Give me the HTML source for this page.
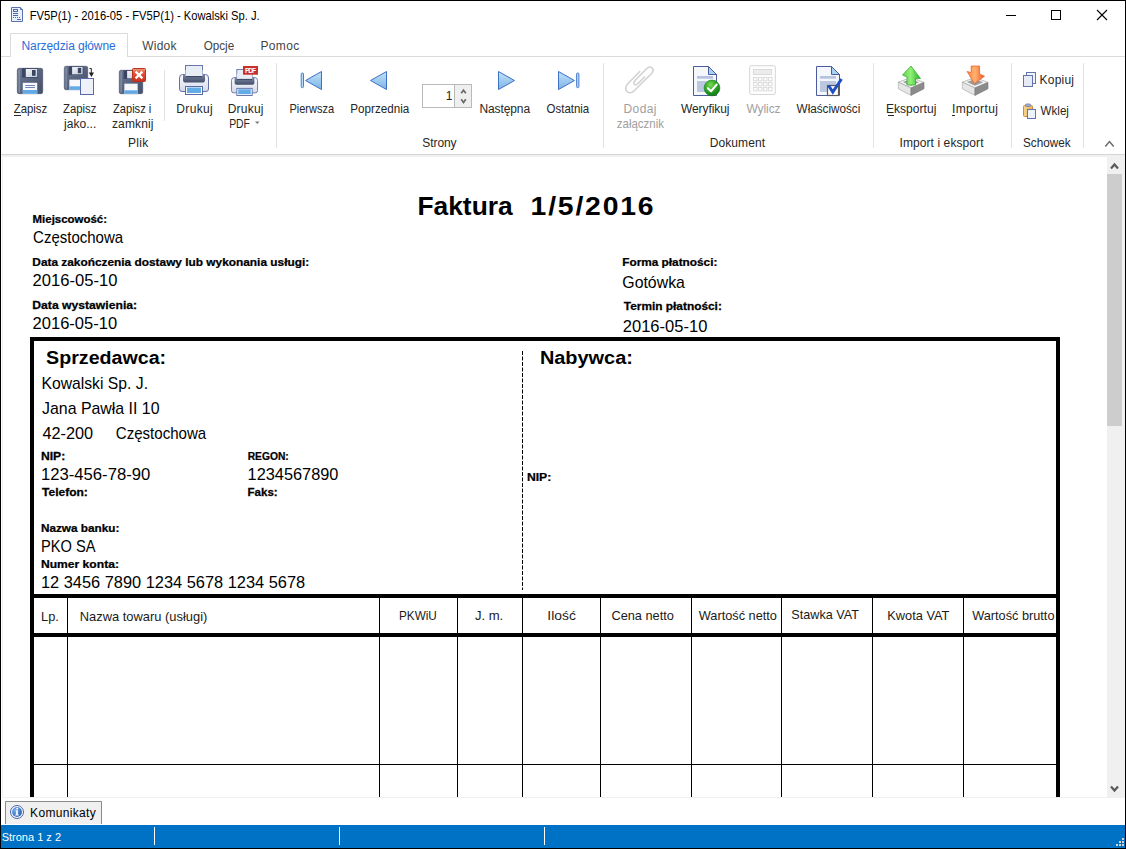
<!DOCTYPE html>
<html><head><meta charset="utf-8"><title>FV5P</title>
<style>
html,body{margin:0;padding:0;background:#fff;overflow:hidden}
svg{display:block;font-family:"Liberation Sans",sans-serif}
</style></head><body>
<svg width="1126" height="849" viewBox="0 0 1126 849">
<rect x="0" y="0" width="1126" height="849" fill="#fff"/>
<!-- tabs -->
<rect x="0" y="56" width="1126" height="1" fill="#dadbdc"/>
<path d="M10.5 57 V33.5 H127.5 V57" fill="#fff" stroke="#dadbdc" stroke-width="1"/>
<!-- ribbon separators -->
<rect x="164" y="70" width="1" height="51" fill="#e2e3e4"/>
<rect x="276" y="63" width="1" height="85" fill="#e2e3e4"/>
<rect x="603" y="63" width="1" height="85" fill="#e2e3e4"/>
<rect x="873" y="63" width="1" height="85" fill="#e2e3e4"/>
<rect x="1011" y="63" width="1" height="85" fill="#e2e3e4"/>
<rect x="1083" y="63" width="1" height="85" fill="#e2e3e4"/>
<!-- ribbon bottom -->
<rect x="1" y="154" width="1124" height="1" fill="#d5d5d5"/>
<rect x="2" y="155" width="1123" height="643" fill="#f0f0f0"/>
<rect x="3" y="157" width="1104" height="640" fill="#fff"/>
<!-- document -->
<svg x="3" y="157" width="1104" height="640" viewBox="3 157 1104 640" overflow="hidden">
<rect x="30" y="337" width="1030" height="4" fill="#000"/><rect x="30" y="337" width="4" height="470" fill="#000"/><rect x="1056" y="337" width="4" height="470" fill="#000"/><rect x="30" y="594" width="1030" height="4" fill="#000"/><rect x="30" y="633" width="1030" height="4" fill="#000"/><rect x="67" y="598" width="1" height="210" fill="#000"/><rect x="379" y="598" width="1" height="210" fill="#000"/><rect x="457" y="598" width="1" height="210" fill="#000"/><rect x="522" y="598" width="1" height="210" fill="#000"/><rect x="600" y="598" width="1" height="210" fill="#000"/><rect x="691" y="598" width="1" height="210" fill="#000"/><rect x="781" y="598" width="1" height="210" fill="#000"/><rect x="872" y="598" width="1" height="210" fill="#000"/><rect x="963" y="598" width="1" height="210" fill="#000"/><rect x="34" y="764" width="1022" height="1" fill="#000"/><line x1="522.5" y1="351" x2="522.5" y2="590" stroke="#000" stroke-width="1" stroke-dasharray="4 1.5"/>
</svg>
<!-- scrollbar -->
<rect x="1107" y="157" width="17" height="640" fill="#f0f0f0"/>
<rect x="1107" y="174" width="15" height="252" fill="#cdcdcd"/>
<!-- bottom panel -->
<rect x="1" y="798" width="1124" height="27" fill="#fff"/>
<path d="M5.5 824 V801.5 H101.5 V824" fill="#f0f0f0" stroke="#8a8a8a" stroke-width="1"/>
<rect x="1" y="825" width="1124" height="23" fill="#0072c6"/>
<rect x="154" y="827" width="1" height="18" fill="#fff"/>
<rect x="339" y="827" width="1" height="18" fill="#fff"/>
<rect x="544" y="827" width="1" height="18" fill="#fff"/>

<defs>
<linearGradient id="gBody" x1="0" y1="0" x2="1" y2="1"><stop offset="0" stop-color="#6d7892"/><stop offset="1" stop-color="#444f69"/></linearGradient>
<linearGradient id="gMetal" x1="0" y1="0" x2="1" y2="1"><stop offset="0" stop-color="#f3f5fa"/><stop offset="1" stop-color="#c3cbdb"/></linearGradient>
<linearGradient id="gPrn" x1="0" y1="0" x2="0" y2="1"><stop offset="0" stop-color="#fafbfd"/><stop offset="1" stop-color="#d3d9ea"/></linearGradient>
<linearGradient id="gSlot" x1="0" y1="0" x2="0" y2="1"><stop offset="0" stop-color="#7a86a2"/><stop offset="1" stop-color="#434e6a"/></linearGradient>
<linearGradient id="gTri" x1="0" y1="0" x2="0" y2="1"><stop offset="0" stop-color="#c3e2f8"/><stop offset="1" stop-color="#7db4e6"/></linearGradient>
<linearGradient id="gRed" x1="0" y1="0" x2="0" y2="1"><stop offset="0" stop-color="#f0a080"/><stop offset="0.35" stop-color="#e0553a"/><stop offset="1" stop-color="#c9301c"/></linearGradient>
<radialGradient id="gGreen" cx="0.4" cy="0.3" r="0.7"><stop offset="0" stop-color="#7ed957"/><stop offset="0.5" stop-color="#2faa2a"/><stop offset="1" stop-color="#137a16"/></radialGradient>
<linearGradient id="gArrG" x1="0" y1="0" x2="1" y2="0"><stop offset="0" stop-color="#5fd64a"/><stop offset="0.45" stop-color="#8ff07a"/><stop offset="1" stop-color="#27b321"/></linearGradient>
<linearGradient id="gArrO" x1="0" y1="0" x2="1" y2="0"><stop offset="0" stop-color="#f98a3c"/><stop offset="0.45" stop-color="#ffb070"/><stop offset="1" stop-color="#ef5a1c"/></linearGradient>
<linearGradient id="gClip" x1="0" y1="0" x2="1" y2="0"><stop offset="0" stop-color="#f7d58e"/><stop offset="1" stop-color="#e9b35e"/></linearGradient>
<radialGradient id="gInfo" cx="0.3" cy="0.3" r="0.8"><stop offset="0" stop-color="#6fb0ea"/><stop offset="1" stop-color="#2f5fb5"/></radialGradient>
</defs>

<!-- title icon -->
<g>
<path d="M11.5 7.5 H20.5 L22.5 9.5 V21.5 H11.5 Z" fill="#e6f3fc" stroke="#5f6fae"/>
<path d="M20.5 7.5 V9.5 H22.5" fill="#9fd0f5" stroke="#5f6fae"/>
<rect x="13.5" y="9.5" width="4" height="2" fill="none" stroke="#5a64a0"/>
<rect x="13" y="13" width="5" height="1" fill="#5a64a0"/>
<rect x="13" y="15" width="5" height="1" fill="#5a64a0"/>
<rect x="13" y="17" width="1" height="1" fill="#5a64a0"/><rect x="15" y="17" width="1" height="1" fill="#5a64a0"/><rect x="17" y="17" width="1" height="1" fill="#5a64a0"/><rect x="19" y="17" width="1" height="1" fill="#5a64a0"/>
<rect x="17" y="19" width="4" height="1" fill="#5a64a0"/>
</g>
<!-- window controls -->
<rect x="1006" y="15" width="10" height="1" fill="#000"/>
<rect x="1051.5" y="10.5" width="9" height="9" fill="none" stroke="#000"/>
<path d="M1097 10 L1107 20 M1107 10 L1097 20" stroke="#000" stroke-width="1.1"/>
<g transform="translate(17,68) scale(1.0)">
<rect x="0.3" y="0.3" width="25.4" height="25.4" rx="1.8" fill="url(#gBody)" stroke="#3f4963" stroke-width="0.6"/>
<rect x="1.5" y="1.5" width="1.6" height="23" fill="#8792ac" opacity="0.8"/>
<rect x="5" y="0.3" width="16" height="9.3" fill="#3b4561"/>
<rect x="8.8" y="1" width="11.4" height="8" fill="url(#gMetal)"/>
<rect x="15" y="2" width="3.6" height="5.8" fill="#3b4561"/>
<rect x="5.8" y="14.8" width="14.4" height="11" fill="#f6f8fb"/>
<rect x="5.8" y="22" width="14.4" height="3.8" fill="#62aae6"/>
<rect x="8.2" y="17" width="9.8" height="0.9" fill="#6676b4"/><rect x="8.2" y="19.1" width="9.8" height="0.9" fill="#6676b4"/></g><g transform="translate(64,66) scale(0.9230769230769231)">
<rect x="0.3" y="0.3" width="25.4" height="25.4" rx="1.8" fill="url(#gBody)" stroke="#3f4963" stroke-width="0.6"/>
<rect x="1.5" y="1.5" width="1.6" height="23" fill="#8792ac" opacity="0.8"/>
<rect x="5" y="0.3" width="16" height="9.3" fill="#3b4561"/>
<rect x="8.8" y="1" width="11.4" height="8" fill="url(#gMetal)"/>
<rect x="15" y="2" width="3.6" height="5.8" fill="#3b4561"/>
<rect x="5.8" y="14.8" width="14.4" height="11" fill="#f6f8fb"/>
<rect x="5.8" y="22" width="14.4" height="3.8" fill="#62aae6"/>
</g>
<rect x="80.5" y="78.5" width="13" height="16" fill="#eef1f9" stroke="#5a6aa6"/>
<path d="M89.5 68.5 H91.3 V74" fill="none" stroke="#222" stroke-width="1"/>
<path d="M88.8 72.5 L94 72.5 L91.4 77 Z" fill="#222"/>
<g transform="translate(119,70) scale(0.9230769230769231)">
<rect x="0.3" y="0.3" width="25.4" height="25.4" rx="1.8" fill="url(#gBody)" stroke="#3f4963" stroke-width="0.6"/>
<rect x="1.5" y="1.5" width="1.6" height="23" fill="#8792ac" opacity="0.8"/>
<rect x="5" y="0.3" width="16" height="9.3" fill="#3b4561"/>
<rect x="8.8" y="1" width="11.4" height="8" fill="url(#gMetal)"/>
<rect x="15" y="2" width="3.6" height="5.8" fill="#3b4561"/>
<rect x="5.8" y="14.8" width="14.4" height="11" fill="#f6f8fb"/>
<rect x="5.8" y="22" width="14.4" height="3.8" fill="#62aae6"/>
</g>
<rect x="132.5" y="68.5" width="13" height="13" rx="1" fill="url(#gRed)" stroke="#b8321f"/>
<path d="M135.6 71.6 L142.4 78.4 M142.4 71.6 L135.6 78.4" stroke="#fff" stroke-width="2.2"/>
<g transform="translate(179,65) scale(1.0)">
<rect x="6.5" y="0.5" width="17" height="12" fill="#e8ecf5" stroke="#6676aa"/>
<path d="M3.5 9.5 H26.5 Q29.5 9.5 29.5 13 V24 Q29.5 26.5 27 26.5 H3 Q0.5 26.5 0.5 24 V13 Q0.5 9.5 3.5 9.5 Z" fill="url(#gPrn)" stroke="#6470a4"/>
<path d="M4 9.5 H26 V15 Q26 17.6 23 17.6 H7 Q4 17.6 4 15 Z" fill="url(#gSlot)"/>
<rect x="6.5" y="5" width="17" height="6.5" fill="#e8ecf5"/>
<rect x="6.5" y="11" width="17" height="1.2" fill="#3f4a66"/>
<rect x="6.5" y="21.5" width="17" height="8" fill="#fff" stroke="#5a69a2"/>
<rect x="8" y="22.5" width="14" height="5.5" fill="#63ace6"/>
</g><g transform="translate(231,69) scale(0.9)">
<rect x="6.5" y="0.5" width="17" height="12" fill="#e8ecf5" stroke="#6676aa"/>
<path d="M3.5 9.5 H26.5 Q29.5 9.5 29.5 13 V24 Q29.5 26.5 27 26.5 H3 Q0.5 26.5 0.5 24 V13 Q0.5 9.5 3.5 9.5 Z" fill="url(#gPrn)" stroke="#6470a4"/>
<path d="M4 9.5 H26 V15 Q26 17.6 23 17.6 H7 Q4 17.6 4 15 Z" fill="url(#gSlot)"/>
<rect x="6.5" y="5" width="17" height="6.5" fill="#e8ecf5"/>
<rect x="6.5" y="11" width="17" height="1.2" fill="#3f4a66"/>
<rect x="6.5" y="21.5" width="17" height="8" fill="#fff" stroke="#5a69a2"/>
<rect x="8" y="22.5" width="14" height="5.5" fill="#63ace6"/>
</g>
<rect x="243" y="66" width="15" height="8.7" fill="#c8312b"/>
<text x="245" y="72.8" font-size="6.6" font-weight="700" fill="#fff" textLength="11" lengthAdjust="spacing">PDF</text>
<rect x="301.2" y="73" width="2.3" height="14.700000000000003" rx="1.1" fill="#b5dbf7" stroke="#3d70c4" stroke-width="0.9"/><path d="M305.5 80.5 L321.5 71.5 L321.5 89.5 Z" fill="url(#gTri)" stroke="#3d70c4" stroke-width="1" stroke-linejoin="round"/><path d="M370.5 80.5 L386.5 71.5 L386.5 89.5 Z" fill="url(#gTri)" stroke="#3d70c4" stroke-width="1" stroke-linejoin="round"/><path d="M514.5 80.5 L498.5 71.5 L498.5 89.5 Z" fill="url(#gTri)" stroke="#3d70c4" stroke-width="1" stroke-linejoin="round"/><path d="M574.5 80.5 L558.5 71.5 L558.5 89.5 Z" fill="url(#gTri)" stroke="#3d70c4" stroke-width="1" stroke-linejoin="round"/><rect x="576.6" y="73" width="2.3" height="14.700000000000003" rx="1.1" fill="#b5dbf7" stroke="#3d70c4" stroke-width="0.9"/>
<!-- spin -->
<rect x="422.5" y="84.5" width="49" height="23" fill="#fff" stroke="#b9b9b9"/>
<rect x="455" y="85" width="16" height="22" fill="#efefef"/>
<rect x="454" y="85" width="1" height="22" fill="#b9b9b9"/>
<path d="M461.2 93.3 L463.5 90.2 L465.8 93.3" fill="none" stroke="#6a6a6a" stroke-width="1.7"/>
<path d="M461.2 99.3 L463.5 102.6 L465.8 99.3" fill="none" stroke="#6a6a6a" stroke-width="1.7"/>
<!-- paperclip -->
<g fill="none" stroke="#d2d2d2" stroke-width="1.6" stroke-linecap="round">
<path d="M639.8 71.5 L628 83.5 Q624 88 627 91.5 Q630.5 94.5 634.5 90.5 L651.5 73.5 Q654.5 70 652 67.8 Q649.5 65.8 646.5 68.8 L635 80.5 Q633 83 634.5 84.3 Q636 85.5 638 83.5 L644.5 77"/>
</g>
<g transform="translate(693,66)">
<path d="M0.5 0.5 H15.5 L23.5 8.5 V29.5 H0.5 Z" fill="#f4f7fc" stroke="#4c5c9c"/>
<path d="M15.5 0.5 V8.5 H23.5 Z" fill="#a6d3f2" stroke="#4c5c9c" stroke-linejoin="round"/>
<rect x="4" y="10" width="16" height="2.7" fill="#b6c3de"/>
<rect x="4" y="15" width="16" height="11" fill="#bcc8e0"/>
</g>
<circle cx="712" cy="88" r="7.9" fill="url(#gGreen)" stroke="#168016" stroke-width="0.6"/>
<path d="M707.8 88.3 L711 91.2 L716.6 84.6" fill="none" stroke="#fff" stroke-width="2.2" stroke-linecap="round" stroke-linejoin="round"/>
<!-- calculator -->
<rect x="749.7" y="65.7" width="25.6" height="28.8" rx="1.5" fill="#fdfdfd" stroke="#d6d6d6" stroke-width="1"/>
<rect x="753.5" y="69.5" width="18" height="5" fill="#ececec" stroke="#dadada"/>
<rect x="753.6" y="77.4" width="3.4" height="3.4" fill="#fff" stroke="#d8d8d8" stroke-width="0.9"/><rect x="758.6" y="77.4" width="3.4" height="3.4" fill="#fff" stroke="#d8d8d8" stroke-width="0.9"/><rect x="763.6" y="77.4" width="3.4" height="3.4" fill="#fff" stroke="#d8d8d8" stroke-width="0.9"/><rect x="768.6" y="77.4" width="3.4" height="3.4" fill="#fff" stroke="#d8d8d8" stroke-width="0.9"/><rect x="753.6" y="82.4" width="3.4" height="3.4" fill="#fff" stroke="#d8d8d8" stroke-width="0.9"/><rect x="758.6" y="82.4" width="3.4" height="3.4" fill="#fff" stroke="#d8d8d8" stroke-width="0.9"/><rect x="763.6" y="82.4" width="3.4" height="3.4" fill="#fff" stroke="#d8d8d8" stroke-width="0.9"/><rect x="768.6" y="82.4" width="3.4" height="3.4" fill="#fff" stroke="#d8d8d8" stroke-width="0.9"/><rect x="753.6" y="87.4" width="3.4" height="3.4" fill="#fff" stroke="#d8d8d8" stroke-width="0.9"/><rect x="758.6" y="87.4" width="3.4" height="3.4" fill="#fff" stroke="#d8d8d8" stroke-width="0.9"/><rect x="763.6" y="87.4" width="3.4" height="3.4" fill="#fff" stroke="#d8d8d8" stroke-width="0.9"/><rect x="768.6" y="87.4" width="3.4" height="3.4" fill="#fff" stroke="#d8d8d8" stroke-width="0.9"/><g transform="translate(816,66)">
<path d="M0.5 0.5 H15.5 L23.5 8.5 V29.5 H0.5 Z" fill="#f4f7fc" stroke="#4c5c9c"/>
<path d="M15.5 0.5 V8.5 H23.5 Z" fill="#a6d3f2" stroke="#4c5c9c" stroke-linejoin="round"/>
<rect x="4" y="10" width="16" height="2.7" fill="#b6c3de"/>
<rect x="4" y="15" width="16" height="11" fill="#bcc8e0"/>
</g>
<rect x="827.5" y="85.5" width="11" height="10" fill="#fff" stroke="#5a5a5a" stroke-width="1.2"/>
<path d="M828.5 85.5 L832.8 92 L841.5 79" fill="none" stroke="#1f4fc4" stroke-width="3" stroke-linejoin="miter"/>
<g transform="translate(898,77.5)">
<path d="M0.3 4.7 L13 0 L26 4.9 L13 10.5 Z" fill="#f2f2f2" stroke="#9a9a9a" stroke-width="0.6"/>
<path d="M0.3 4.7 L13 10.5 V17.9 L0.3 11.3 Z" fill="#e6e6e6" stroke="#a0a0a0" stroke-width="0.6"/>
<path d="M26 4.9 L13 10.5 V17.9 L26 11.3 Z" fill="#8b8b8b" stroke="#777" stroke-width="0.6"/>
<path d="M5 4.6 L13 1.6 L21 4.8 L13 8.2 Z" fill="#9c9c9c"/>
</g>
<path d="M911 66 L920.5 78.5 L915.5 78.5 L915.5 85 L907 85 L907 77 L902.5 75 Z" fill="url(#gArrG)" stroke="#2aa624" stroke-width="0.7" stroke-linejoin="round"/>
<g transform="translate(962,77.5)">
<path d="M0.3 4.7 L13 0 L26 4.9 L13 10.5 Z" fill="#f2f2f2" stroke="#9a9a9a" stroke-width="0.6"/>
<path d="M0.3 4.7 L13 10.5 V17.9 L0.3 11.3 Z" fill="#e6e6e6" stroke="#a0a0a0" stroke-width="0.6"/>
<path d="M26 4.9 L13 10.5 V17.9 L26 11.3 Z" fill="#8b8b8b" stroke="#777" stroke-width="0.6"/>
<path d="M5 4.6 L13 1.6 L21 4.8 L13 8.2 Z" fill="#9c9c9c"/>
</g>
<path d="M971.2 66 L979.6 66 L979.6 74 L984.5 76.2 L974.2 83.8 L967.2 71.5 L971.2 72.5 Z" fill="url(#gArrO)" stroke="#e5561e" stroke-width="0.7" stroke-linejoin="round"/>
<!-- copy -->
<rect x="1026.5" y="72.5" width="9" height="11" fill="#f1f4fa" stroke="#6373ac"/>
<rect x="1023.5" y="75.5" width="9" height="11" fill="#e6ebf6" stroke="#6373ac"/>
<!-- paste -->
<rect x="1023.5" y="105.5" width="9" height="11" rx="1" fill="url(#gClip)" stroke="#d08a3a"/>
<rect x="1025.5" y="104" width="5" height="2.5" rx="1" fill="#aab4cc" stroke="#6373ac" stroke-width="0.8"/>
<rect x="1027.5" y="109.5" width="8" height="9" fill="#eef2f9" stroke="#6373ac"/>
<!-- dropdown arrow PDF -->
<path d="M255 121.5 L259.5 121.5 L257.25 124 Z" fill="#777"/>
<!-- ribbon collapse -->
<path d="M1105.3 146.6 L1109.5 141.6 L1113.7 146.6" fill="none" stroke="#6a6a6a" stroke-width="1.5"/>
<!-- scroll arrows -->
<path d="M1111 168.5 L1114.5 164.5 L1118 168.5" fill="none" stroke="#5a5a5a" stroke-width="2.2"/>
<path d="M1111 786.5 L1114.5 790.5 L1118 786.5" fill="none" stroke="#5a5a5a" stroke-width="2.2"/>
<!-- info icon -->
<circle cx="17" cy="812" r="6.5" fill="#fbfdff" stroke="#4f5f9e" stroke-width="1"/>
<circle cx="17" cy="812" r="5" fill="url(#gInfo)"/>
<path d="M15.6 810.2 H17.9 V814.6 H18.8 V815.6 H15.2 V814.6 H16.1 V811.2 H15.6 Z" fill="#f4f9ff"/>
<ellipse cx="17.2" cy="808.6" rx="1.2" ry="0.9" fill="#f4f9ff"/>
<!-- underline accelerators -->
<rect x="14" y="115" width="7" height="1" fill="#262626"/>
<rect x="888" y="115" width="6" height="1" fill="#262626"/>
<rect x="952" y="115" width="3" height="1" fill="#262626"/>
<!-- grip -->
<g fill="#d9d2c4"><rect x="1122" y="838" width="2" height="2"/><rect x="1119" y="841" width="2" height="2"/><rect x="1122" y="841" width="2" height="2"/><rect x="1116" y="844" width="2" height="2"/><rect x="1119" y="844" width="2" height="2"/><rect x="1122" y="844" width="2" height="2"/></g>

<text transform="translate(29.67,20.00) scale(0.9327,1)" font-size="12" fill="#000">FV5P(1) - 2016-05 - FV5P(1) - Kowalski Sp. J.</text><text x="21.50" y="50.00" font-size="12" fill="#2a6ed8" letter-spacing="-0.080">Narzędzia główne</text><text x="142.20" y="50.00" font-size="12" fill="#444" letter-spacing="0.225">Widok</text><text transform="translate(203.70,50.00) scale(0.9742,1)" font-size="12" fill="#444">Opcje</text><text x="260.50" y="50.00" font-size="12" fill="#444" letter-spacing="0.325">Pomoc</text><text transform="translate(13.80,113.00) scale(0.9457,1)" font-size="12" fill="#262626">Zapisz</text><text transform="translate(63.00,113.00) scale(0.9429,1)" font-size="12" fill="#262626">Zapisz</text><text x="64.00" y="128.00" font-size="12" fill="#262626" letter-spacing="0.033">jako...</text><text transform="translate(113.00,113.00) scale(0.9268,1)" font-size="12" fill="#262626">Zapisz i</text><text x="112.00" y="128.00" font-size="12" fill="#262626" letter-spacing="0.117">zamknij</text><text x="128.00" y="146.60" font-size="12" fill="#262626" letter-spacing="0.267">Plik</text><text x="176.30" y="113.00" font-size="12" fill="#262626" letter-spacing="0.340">Drukuj</text><text x="227.70" y="113.00" font-size="12" fill="#262626" letter-spacing="0.220">Drukuj</text><text transform="translate(229.13,128.00) scale(0.8696,1)" font-size="12" fill="#262626">PDF</text><text transform="translate(289.38,113.00) scale(0.9188,1)" font-size="12" fill="#262626">Pierwsza</text><text transform="translate(350.33,113.00) scale(0.9717,1)" font-size="12" fill="#262626">Poprzednia</text><text x="479.50" y="113.00" font-size="12" fill="#262626" letter-spacing="-0.114">Następna</text><text transform="translate(546.60,113.00) scale(0.9556,1)" font-size="12" fill="#262626">Ostatnia</text><text x="422.30" y="146.60" font-size="12" fill="#262626" letter-spacing="-0.080">Strony</text><text x="623.60" y="113.00" font-size="12" fill="#a0a0a0" letter-spacing="0.350">Dodaj</text><text transform="translate(616.80,128.00) scale(0.9571,1)" font-size="12" fill="#a0a0a0">załącznik</text><text x="680.90" y="113.00" font-size="12" fill="#262626" letter-spacing="-0.062">Weryfikuj</text><text x="746.50" y="113.00" font-size="12" fill="#a0a0a0" letter-spacing="-0.100">Wylicz</text><text transform="translate(796.60,113.00) scale(0.9754,1)" font-size="12" fill="#262626">Właściwości</text><text x="709.70" y="146.60" font-size="12" fill="#262626" letter-spacing="0.100">Dokument</text><text x="886.00" y="113.00" font-size="12" fill="#262626" letter-spacing="0.037">Eksportuj</text><text x="952.00" y="113.00" font-size="12" fill="#262626" letter-spacing="0.357">Importuj</text><text x="899.50" y="146.60" font-size="12" fill="#262626" letter-spacing="0.087">Import i eksport</text><text x="1039.60" y="84.00" font-size="12" fill="#262626" letter-spacing="0.200">Kopiuj</text><text transform="translate(1040.60,115.40) scale(0.9655,1)" font-size="12" fill="#262626">Wklej</text><text transform="translate(1023.02,146.60) scale(0.9792,1)" font-size="12" fill="#262626">Schowek</text><text x="445.80" y="100.00" font-size="12" fill="#262626">1</text><text transform="translate(417.49,214.60) scale(1.0539,1)" font-size="25" font-weight="700" fill="#000">Faktura</text><text transform="translate(530.57,214.60) scale(1.1328,1)" font-size="25" letter-spacing="1.608" font-weight="700" fill="#000">1/5/2016</text><text transform="translate(32.56,223.00) scale(1.0414,1)" font-size="11" font-weight="700" fill="#000" stroke="#000" stroke-width="0.25">Miejscowość:</text><text transform="translate(33.06,243.00) scale(0.9379,1)" font-size="16" fill="#000">Częstochowa</text><text transform="translate(32.32,266.00) scale(1.0788,1)" font-size="11" font-weight="700" fill="#000" stroke="#000" stroke-width="0.25">Data zakończenia dostawy lub wykonania usługi:</text><text transform="translate(32.56,286.00) scale(1.0375,1)" font-size="16" fill="#000">2016-05-10</text><text transform="translate(32.29,309.00) scale(1.1065,1)" font-size="11" font-weight="700" fill="#000" stroke="#000" stroke-width="0.25">Data wystawienia:</text><text transform="translate(32.57,329.00) scale(1.0337,1)" font-size="16" fill="#000">2016-05-10</text><text transform="translate(622.23,266.00) scale(1.0747,1)" font-size="11" font-weight="700" fill="#000" stroke="#000" stroke-width="0.25">Forma płatności:</text><text transform="translate(622.31,288.00) scale(0.9919,1)" font-size="16" fill="#000">Gotówka</text><text transform="translate(623.80,310.00) scale(1.0800,1)" font-size="11" font-weight="700" fill="#000" stroke="#000" stroke-width="0.25">Termin płatności:</text><text transform="translate(622.77,332.00) scale(1.0337,1)" font-size="16" fill="#000">2016-05-10</text><text transform="translate(46.11,364.00) scale(1.0907,1)" font-size="18" font-weight="700" fill="#000">Sprzedawca:</text><text transform="translate(539.89,364.00) scale(1.1074,1)" font-size="18" font-weight="700" fill="#000">Nabywca:</text><text transform="translate(41.42,389.00) scale(0.9830,1)" font-size="16" fill="#000">Kowalski Sp. J.</text><text transform="translate(42.00,414.00) scale(0.9949,1)" font-size="16" fill="#000">Jana Pawła II 10</text><text transform="translate(42.40,439.00) scale(1.0184,1)" font-size="16" fill="#000">42-200</text><text transform="translate(115.76,439.00) scale(0.9421,1)" font-size="16" fill="#000">Częstochowa</text><text transform="translate(40.90,460.00) scale(1.1050,1)" font-size="11" font-weight="700" fill="#000" stroke="#000" stroke-width="0.25">NIP:</text><text transform="translate(247.66,460.00) scale(0.9357,1)" font-size="11" font-weight="700" fill="#000" stroke="#000" stroke-width="0.25">REGON:</text><text transform="translate(40.96,480.00) scale(1.0427,1)" font-size="16" fill="#000">123-456-78-90</text><text transform="translate(247.58,480.00) scale(1.0218,1)" font-size="16" fill="#000">1234567890</text><text transform="translate(42.00,496.00) scale(1.0951,1)" font-size="11" font-weight="700" fill="#000" stroke="#000" stroke-width="0.25">Telefon:</text><text transform="translate(247.55,496.00) scale(1.0481,1)" font-size="11" font-weight="700" fill="#000" stroke="#000" stroke-width="0.25">Faks:</text><text transform="translate(40.93,532.00) scale(1.0708,1)" font-size="11" font-weight="700" fill="#000" stroke="#000" stroke-width="0.25">Nazwa banku:</text><text transform="translate(41.08,552.00) scale(0.9153,1)" font-size="16" fill="#000">PKO SA</text><text transform="translate(40.90,568.00) scale(1.1014,1)" font-size="11" font-weight="700" fill="#000" stroke="#000" stroke-width="0.25">Numer konta:</text><text transform="translate(40.98,588.00) scale(1.0245,1)" font-size="16" fill="#000">12 3456 7890 1234 5678 1234 5678</text><text transform="translate(526.89,481.00) scale(1.1100,1)" font-size="11" font-weight="700" fill="#000" stroke="#000" stroke-width="0.25">NIP:</text><text transform="translate(41.03,621.00) scale(1.0667,1)" font-size="12" fill="#1a1a1a">Lp.</text><text transform="translate(79.72,621.00) scale(1.0761,1)" font-size="12" fill="#1a1a1a">Nazwa towaru (usługi)</text><text transform="translate(399.02,620.00) scale(0.9784,1)" font-size="12" fill="#1a1a1a">PKWiU</text><text transform="translate(474.90,620.00) scale(1.0920,1)" font-size="12" fill="#1a1a1a">J. m.</text><text transform="translate(547.34,620.00) scale(1.1565,1)" font-size="12" fill="#1a1a1a">Ilość</text><text transform="translate(611.44,620.00) scale(1.0649,1)" font-size="12" fill="#1a1a1a">Cena netto</text><text transform="translate(698.80,620.00) scale(1.0630,1)" font-size="12" fill="#1a1a1a">Wartość netto</text><text transform="translate(791.35,619.00) scale(1.0524,1)" font-size="12" fill="#1a1a1a">Stawka VAT</text><text transform="translate(887.33,620.00) scale(1.0667,1)" font-size="12" fill="#1a1a1a">Kwota VAT</text><text transform="translate(972.20,620.00) scale(1.0623,1)" font-size="12" fill="#1a1a1a">Wartość brutto</text><text x="30.10" y="816.70" font-size="12" fill="#000" letter-spacing="0.333">Komunikaty</text><text x="1.70" y="841.00" font-size="11" fill="#fff">Strona 1 z 2</text>
<!-- window border -->
<rect x="0.5" y="0.5" width="1125" height="848" fill="none" stroke="#000" stroke-width="1"/>
</svg>
</body></html>
